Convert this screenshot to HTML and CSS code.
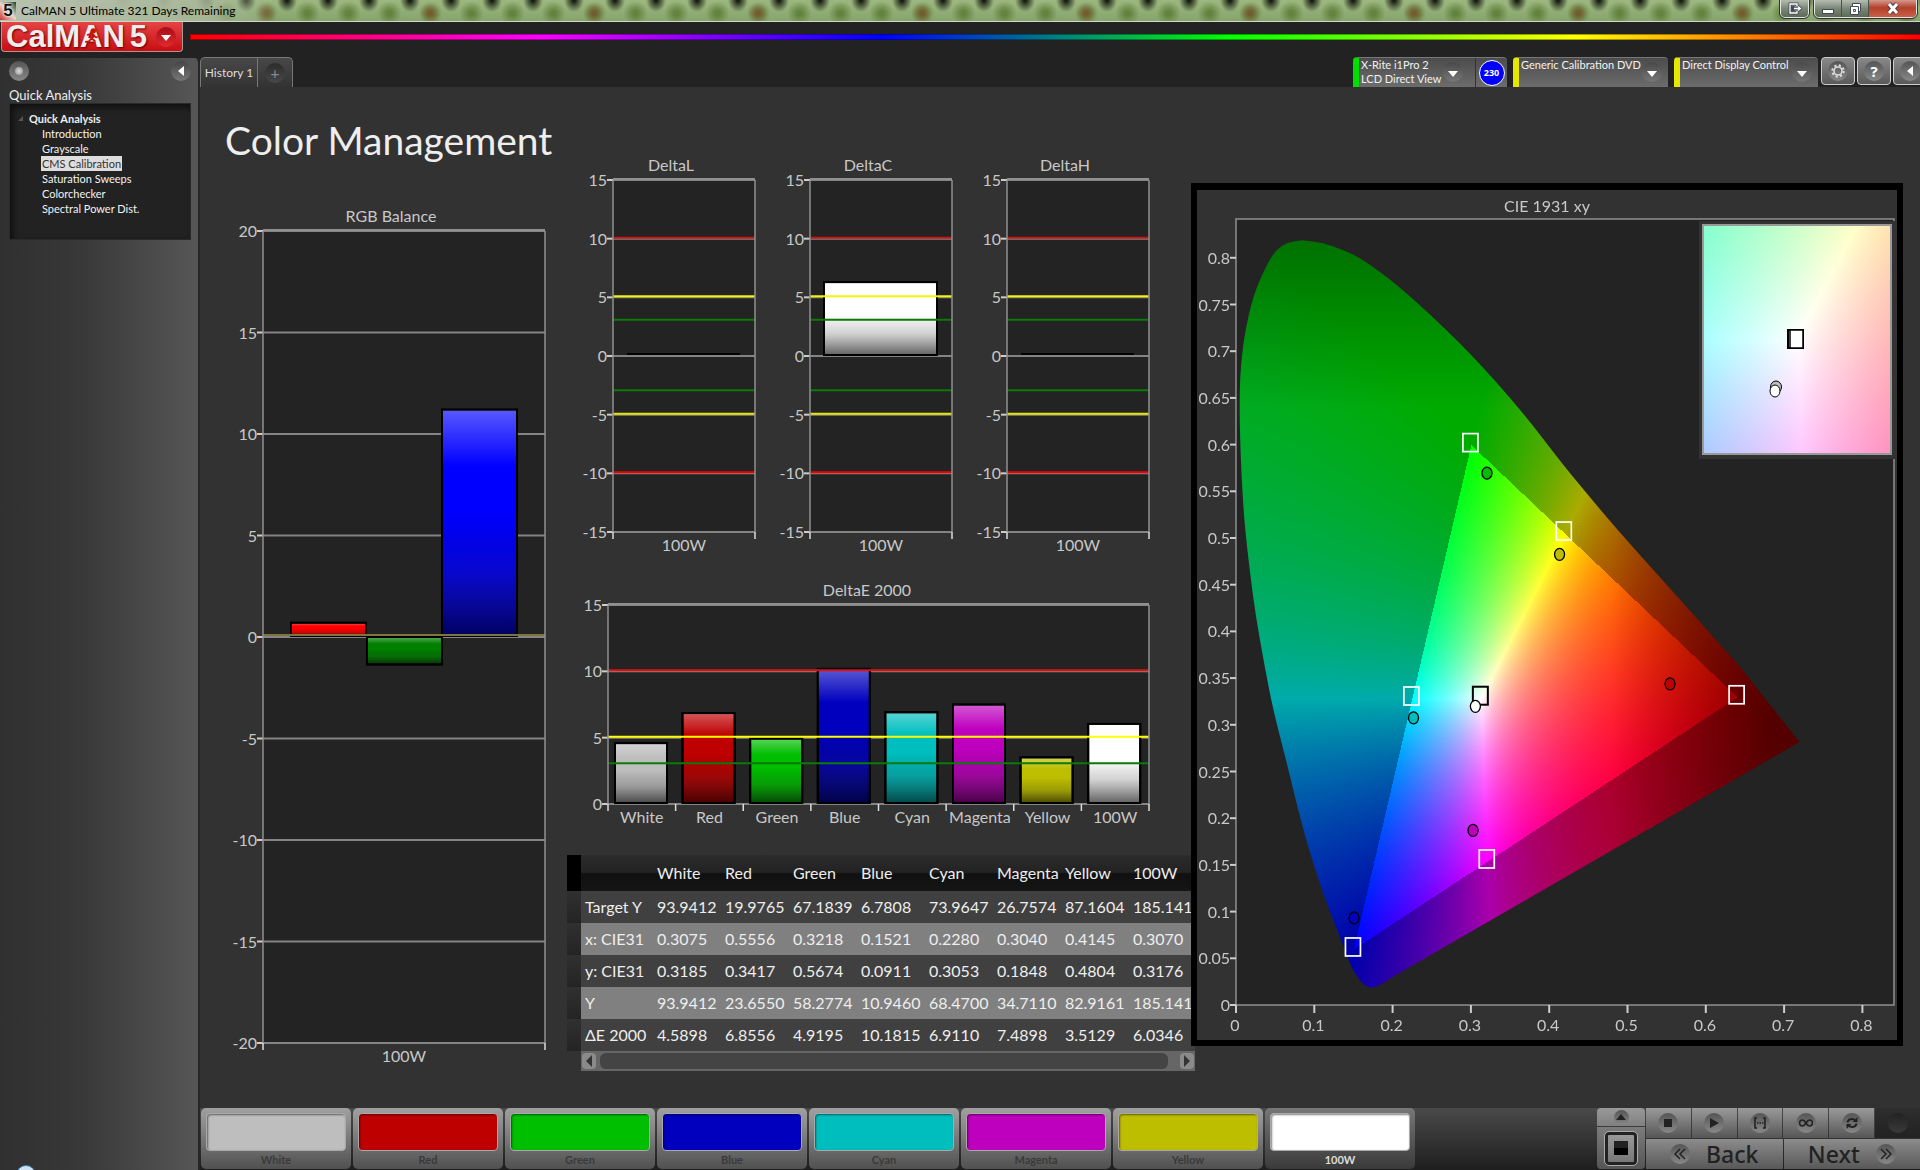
FILE: index.html
```html
<!DOCTYPE html>
<html lang="en">
<head>
<meta charset="utf-8">
<title>CalMAN 5 Ultimate</title>
<link rel="stylesheet" href="styles.css">
</head>
<body>
<div class="titlebar">
  <span class="app-icon">5</span>
  <span class="titlebar-text">CalMAN 5 Ultimate 321 Days Remaining</span>
  <div class="win-group">
    <button class="win-btn" aria-label="Detach"><svg width="14" height="14" viewBox="0 0 14 14"><path d="M9 4V2H2v9h7V9M5 4v5M6 6.500h6M10 4.500l2.500 2-2.500 2" fill="none" stroke="#444a55" stroke-width="3"/><path d="M9 4V2H2v9h7V9M6 6.500h6M10 4.500l2.500 2-2.500 2" fill="none" stroke="#fff" stroke-width="1.300"/></svg></button>
  </div>
  <div class="win-group win-group-main">
    <button class="win-btn" aria-label="Minimize"><svg width="14" height="14" viewBox="0 0 14 14"><rect x="1.500" y="7.500" width="11" height="4" fill="#fff" stroke="#444a55"/></svg></button>
    <button class="win-btn" aria-label="Restore"><svg width="14" height="14" viewBox="0 0 14 14"><path d="M4.500 1.500h8v8h-2v3h-8v-8h2z" fill="#fff" stroke="#444a55"/><path d="M5.500 7.500h2v2h-2zM5 4.500h5.500V10" fill="none" stroke="#444a55"/></svg></button>
    <button class="win-btn win-close" aria-label="Close"><svg width="14" height="14" viewBox="0 0 14 14"><path d="M3 2l8 9M11 2l-8 9" stroke="#54404a" stroke-width="5"/><path d="M3 2l8 9M11 2l-8 9" stroke="#fff" stroke-width="3"/></svg></button>
  </div>
</div>

<div class="brandbar">
  <button class="brand">
    <span class="brand-name">CalM<span class="brand-a">A<svg class="runner" viewBox="0 0 12 14"><circle cx="7.500" cy="2" r="1.600"/><path d="M2.500 5.500l3-1 2 .5-1 3.500 2 1.500v3M6 8l-2 2.500-3 .5M7.500 5l1.500 2 2 .3" fill="none" stroke-width="1.500"/></svg></span>N<span class="brand-5">5</span></span>
    <span class="round round-red"><svg width="10" height="6" viewBox="0 0 10 6"><path d="M0 0h10L5 6z" fill="#fff"/></svg></span>
  </button>
  <div class="rainbow"></div>
</div>

<div class="workspace">
  <aside class="sidebar">
    <div class="sidebar-top">
      <button class="round" aria-label="Pin"><span class="pin-dot"></span></button>
      <button class="round round-edge" aria-label="Collapse"><svg width="6" height="10" viewBox="0 0 6 10"><path d="M6 0v10L0 5z" fill="#fff"/></svg></button>
    </div>
    <h2 class="sidebar-title">Quick Analysis</h2>
    <nav class="tree">
      <div class="tree-root"><svg width="5" height="5" viewBox="0 0 5 5"><path d="M5 0v5H0z" fill="#555"/></svg>Quick Analysis</div>
      <ul class="tree-list">
        <li><a href="#intro">Introduction</a></li>
        <li><a href="#gray">Grayscale</a></li>
        <li><a href="#cms" class="current">CMS Calibration</a></li>
        <li><a href="#sat">Saturation Sweeps</a></li>
        <li><a href="#checker">Colorchecker</a></li>
        <li><a href="#spd">Spectral Power Dist.</a></li>
      </ul>
    </nav>
    <span class="orb"></span>
  </aside>

  <div class="main">
    <header class="tabs">
      <div class="history">
        <button class="history-tab">History 1</button>
        <button class="history-tab history-add" aria-label="Add history"><span class="round round-dark">+</span></button>
      </div>
      <div class="devices">
        <div class="device meter">
          <button class="device-main"><span class="device-text">X-Rite i1Pro 2<br>LCD Direct View</span><span class="round round-low"><svg width="10" height="6" viewBox="0 0 10 6"><path d="M0 0h10L5 6z" fill="#fff"/></svg></span></button>
          <button class="reading"><span class="reading-dot">230</span></button>
        </div>
        <div class="device source">
          <button class="device-main"><span class="device-text">Generic Calibration DVD</span><span class="round round-low"><svg width="10" height="6" viewBox="0 0 10 6"><path d="M0 0h10L5 6z" fill="#fff"/></svg></span></button>
        </div>
        <div class="device display">
          <button class="device-main"><span class="device-text">Direct Display Control</span><span class="round round-low"><svg width="10" height="6" viewBox="0 0 10 6"><path d="M0 0h10L5 6z" fill="#fff"/></svg></span></button>
        </div>
        <div class="tools">
          <button class="tool" aria-label="Settings"><span class="round"><svg width="14" height="14" viewBox="0 0 14 14"><circle cx="7" cy="7" r="4" fill="none" stroke="#ddd" stroke-width="1.600"/><circle cx="7" cy="7" r="5.700" fill="none" stroke="#ddd" stroke-width="2" stroke-dasharray="2.200 2.280"/></svg></span></button>
          <button class="tool" aria-label="Help"><span class="round help">?</span></button>
          <button class="tool" aria-label="Collapse panel"><span class="round"><svg width="6" height="10" viewBox="0 0 6 10"><path d="M6 0v10L0 5z" fill="#fff"/></svg></span></button>
        </div>
      </div>
    </header>

    <main class="content">
      <section class="col-left">
        <h1 class="page-title">Color Management</h1>
        <svg class="chart" id="rgb-balance" viewBox="0 0 360 870"></svg>
      </section>

      <section class="col-mid">
        <div class="deltas">
          <svg class="chart" id="delta-l" viewBox="0 0 197 410"></svg>
          <svg class="chart" id="delta-c" viewBox="0 0 197 410"></svg>
          <svg class="chart" id="delta-h" viewBox="0 0 197 410"></svg>
        </div>
        <div class="delta-e"><svg class="chart" id="delta-e" viewBox="0 0 591 270"></svg></div>
        <div class="readings">
          <table>
            <colgroup><col class="c-mark"><col class="c-label"><col span="8" class="c-value"></colgroup>
            <thead><tr><td></td><th></th><th>White</th><th>Red</th><th>Green</th><th>Blue</th><th>Cyan</th><th>Magenta</th><th>Yellow</th><th>100W</th></tr></thead>
            <tbody>
              <tr><td></td><th>Target Y</th><td>93.9412</td><td>19.9765</td><td>67.1839</td><td>6.7808</td><td>73.9647</td><td>26.7574</td><td>87.1604</td><td>185.141</td></tr>
              <tr><td></td><th>x: CIE31</th><td>0.3075</td><td>0.5556</td><td>0.3218</td><td>0.1521</td><td>0.2280</td><td>0.3040</td><td>0.4145</td><td>0.3070</td></tr>
              <tr><td></td><th>y: CIE31</th><td>0.3185</td><td>0.3417</td><td>0.5674</td><td>0.0911</td><td>0.3053</td><td>0.1848</td><td>0.4804</td><td>0.3176</td></tr>
              <tr><td></td><th>Y</th><td>93.9412</td><td>23.6550</td><td>58.2774</td><td>10.9460</td><td>68.4700</td><td>34.7110</td><td>82.9161</td><td>185.141</td></tr>
              <tr><td></td><th>ΔE 2000</th><td>4.5898</td><td>6.8556</td><td>4.9195</td><td>10.1815</td><td>6.9110</td><td>7.4898</td><td>3.5129</td><td>6.0346</td></tr>
            </tbody>
          </table>
          <div class="hscroll">
            <button class="hscroll-btn" aria-label="Scroll left"><svg width="6" height="12" viewBox="0 0 6 12"><path d="M6 0v12L0 6z" fill="#333"/></svg></button>
            <div class="hscroll-thumb"></div>
            <button class="hscroll-btn" aria-label="Scroll right"><svg width="6" height="12" viewBox="0 0 6 12"><path d="M0 0v12l6-6z" fill="#333"/></svg></button>
          </div>
        </div>
      </section>

      <section class="cie">
        <svg class="chart" id="cie" viewBox="0 0 700 850">
          <rect class="plot-bg" x="39" y="29" width="658" height="786"/>
          <foreignObject x="39" y="29" width="658" height="786"><canvas id="gamut" width="658" height="786"></canvas></foreignObject>
          <g id="cie-axes"></g>
          <g id="cie-marks"></g>
          <rect x="502" y="31" width="197" height="238" fill="#323232"/>
          <foreignObject x="506" y="35" width="188" height="229"><canvas id="inset" width="188" height="229"></canvas></foreignObject>
          <rect x="506" y="35" width="188" height="229" fill="none" stroke="#999" stroke-width="2"/>
          <g class="inset-marks">
            <rect x="591" y="140" width="15" height="18" fill="none" stroke="#000" stroke-width="2"/>
            <rect x="593" y="140" width="13" height="18" fill="#fff" stroke="#000" stroke-width="1.500"/>
            <ellipse cx="579" cy="197" rx="5.500" ry="6" fill="#bebebe" stroke="#000"/>
            <ellipse cx="578" cy="201" rx="5" ry="6" fill="#fff" stroke="#000"/>
          </g>
        </svg>
      </section>
    </main>

    <footer class="bottombar">
      <div class="patches">
        <button class="patch white"><span class="swatch"></span>White</button>
        <button class="patch red"><span class="swatch"></span>Red</button>
        <button class="patch green"><span class="swatch"></span>Green</button>
        <button class="patch blue"><span class="swatch"></span>Blue</button>
        <button class="patch cyan"><span class="swatch"></span>Cyan</button>
        <button class="patch magenta"><span class="swatch"></span>Magenta</button>
        <button class="patch yellow"><span class="swatch"></span>Yellow</button>
        <button class="patch full active"><span class="swatch"></span>100W</button>
      </div>
      <div class="transport">
        <div class="pattern">
          <button class="pattern-up" aria-label="Show pattern"><span class="round round-small"><svg width="10" height="6" viewBox="0 0 10 6"><path d="M0 6h10L5 0z" fill="#222"/></svg></span></button>
          <button class="pattern-window" aria-label="Pattern window"><span class="pattern-frame"><span class="pattern-box"></span></span></button>
        </div>
        <div class="controls">
          <div class="controls-row">
            <button class="ctl" aria-label="Stop"><span class="round"><svg width="8" height="8" viewBox="0 0 8 8"><rect width="8" height="8" fill="#222"/></svg></span></button>
            <button class="ctl" aria-label="Play"><span class="round"><svg width="9" height="10" viewBox="0 0 9 10"><path d="M0 0l9 5-9 5z" fill="#222"/></svg></span></button>
            <button class="ctl" aria-label="Read series"><span class="round"><svg width="12" height="12" viewBox="0 0 12 12"><path d="M3 1H1v10h2M9 1h2v10H9" fill="none" stroke="#222" stroke-width="1.600"/><path d="M3 6h1.500M5.500 6H7M8 6h1.500" stroke="#222" stroke-width="1.500"/></svg></span></button>
            <button class="ctl" aria-label="Continuous"><span class="round"><svg width="14" height="8" viewBox="0 0 14 8"><path d="M7 4C5.500 1.500 4.500 1 3.500 1a3 3 0 000 6C4.500 7 5.500 6.500 7 4s2.500-3 3.500-3a3 3 0 010 6C9.500 7 8.500 6.500 7 4z" fill="none" stroke="#222" stroke-width="1.600"/></svg></span></button>
            <button class="ctl" aria-label="Refresh"><span class="round"><svg width="12" height="12" viewBox="0 0 12 12"><path d="M1.500 5.500C2 3 4 2 6 2c1.500 0 2.500.5 3.500 1.500M10.500 6.500C10 9 8 10 6 10c-1.500 0-2.500-.5-3.500-1.500" fill="none" stroke="#222" stroke-width="2"/><path d="M11.500 0v5h-5zM.500 12V7h5z" fill="#222"/></svg></span></button>
            <button class="ctl ctl-off" aria-label="Unused"><span class="round round-off"></span></button>
          </div>
          <div class="controls-row">
            <button class="nav-btn"><span class="round"><svg width="12" height="12" viewBox="0 0 12 12"><path d="M6 1L1 6l5 5M11 1L6 6l5 5" fill="none" stroke="#222" stroke-width="1.500"/></svg></span>Back</button>
            <button class="nav-btn">Next<span class="round"><svg width="12" height="12" viewBox="0 0 12 12"><path d="M1 1l5 5-5 5M6 1l5 5-5 5" fill="none" stroke="#222" stroke-width="1.500"/></svg></span></button>
          </div>
        </div>
      </div>
    </footer>
  </div>
</div>
<script src="charts.js"></script>
</body>
</html>
```
FILE: styles.css
```css
* { box-sizing: border-box; }
body {
  margin: 0;
  min-height: 100vh;
  display: flex;
  flex-direction: column;
  background: #222;
  color: #eee;
  font-family: Lato, "Noto Sans", sans-serif;
  font-size: 13px;
  overflow-x: hidden;
}
button {
  font: inherit;
  color: inherit;
  border: 0;
  padding: 0;
  margin: 0;
  background: none;
}
svg { display: block; }
h1, h2, ul { margin: 0; padding: 0; font-weight: normal; list-style: none; }

/* window title bar */
.titlebar {
  height: 22px;
  display: flex;
  align-items: flex-start;
  border-bottom: 1px solid #cfd8c8;
  background:
    linear-gradient(90deg, #b9c1b0 0, rgba(170, 185, 155, .9) 200px, transparent 280px),
    radial-gradient(ellipse 10px 10px at 50% 60%, rgba(130, 50, 30, .5) 10%, transparent) 20px 0 / 164px 22px,
    radial-gradient(ellipse 12px 12px at 50% 60%, rgba(80, 115, 40, .7) 20%, transparent) 0 0 / 41px 22px,
    radial-gradient(ellipse 10px 12px at 0 0, #151b10 10%, transparent) 0 0 / 41px 22px,
    radial-gradient(ellipse 10px 12px at 100% 0, #151b10 10%, transparent) 0 0 / 41px 22px,
    linear-gradient(#9db780, #86a46c);
}
.app-icon {
  width: 16px;
  height: 18px;
  margin-top: 2px;
  font: bold 17px/18px "Liberation Sans", sans-serif;
  color: #111;
  text-align: center;
  text-shadow: 0 0 2px #fff, 0 0 2px #fff;
  background: linear-gradient(45deg, #c33, #e9d6c8, #164a24);
}
.titlebar-text {
  margin-left: 5px;
  flex: 1;
  font: 12px/22px "Noto Sans", sans-serif;
  font-family: Lato, "Noto Sans", sans-serif;
  color: #000;
}
.win-group {
  display: flex;
  height: 18px;
  margin-right: 5px;
  border: 1px solid #e4e4e4;
  border-top: 0;
  border-radius: 0 0 5px 5px;
  outline: 1px solid #333;
  background: linear-gradient(#b5bdb0, #7b8776 50%, #5e6a58);
  overflow: hidden;
}
.win-group-main { margin-right: 3px; }
.win-btn { width: 27px; display: grid; place-items: center; border-right: 1px solid #4a5246; }
.win-btn:last-child { border-right: 0; }
.win-close { width: 47px; background: linear-gradient(#d59a8d, #b3402a 45%, #c9604a); }

/* brand */
.brandbar { height: 36px; display: flex; align-items: flex-start; }
.brand {
  width: 182px;
  height: 30px;
  margin-left: 1px;
  display: flex;
  align-items: center;
  justify-content: space-between;
  padding: 0 6px 0 4px;
  border: 1px solid #a99;
  border-top: 0;
  border-radius: 0 0 4px 4px;
  background: linear-gradient(#e54444, #c80d12);
}
.brand-name {
  font: bold 31px/27px "Liberation Sans", sans-serif;
  color: #eee;
  text-shadow: 1px 1px 2px #600;
  white-space: nowrap;
}
.brand-a { position: relative; }
.brand-5 { margin-left: 5px; }
.runner { position: absolute; left: 4px; top: 9px; width: 15px; height: 18px; fill: #c11; stroke: #c11; }
.rainbow {
  flex: 1;
  height: 6px;
  margin: 12px 0 0 7px;
  border: 1px solid rgba(0, 0, 0, .35);
  border-right: 0;
  background: linear-gradient(90deg, #f00, #f0f 20%, #00f 40%, #0f0 60%, #ff0 80%, #f00);
}

/* round icon holders */
.round {
  flex: none;
  width: 20px;
  height: 20px;
  border-radius: 50%;
  display: grid;
  place-items: center;
  background: linear-gradient(#555, #888);
}
.round-red { background: linear-gradient(#a80d14, #e02a30); }
.round-dark { background: linear-gradient(#2c2c2c, #484848); color: #888; font-size: 16px; line-height: 20px; }
.round-low { background: linear-gradient(#484848, #777); }
.round-low svg, .round-red svg { margin-top: 3px; }
.round-small { width: 15px; height: 15px; }
.round-off { background: linear-gradient(#222, #3a3a3a); }

/* workspace */
.workspace { flex: 1; display: flex; }
.sidebar {
  position: relative;
  flex: none;
  width: 200px;
  padding: 3px 7px 0 9px;
  border-right: 2px solid #262626;
  border-top-right-radius: 5px;
  background: linear-gradient(90deg, #303030, #383838 40%, #565656);
  overflow: hidden;
}
.sidebar-top { display: flex; justify-content: space-between; }
.pin-dot { width: 8px; height: 8px; border-radius: 50%; background: radial-gradient(#ddd, #888); }
.round-edge { background: linear-gradient(#444, #777); }
.sidebar-title { font-size: 13px; line-height: 16px; margin-top: 6px; }
.tree {
  height: 137px;
  padding-top: 7px;
  background: #222;
  box-shadow: inset 3px 3px 6px #0e0e0e;
  border: 1px solid #2a2a2a;
  font-size: 11px;
  line-height: 15px;
}
.tree-root { display: flex; align-items: center; gap: 6px; padding-left: 8px; font-weight: bold; }
.tree-list { padding: 0 0 0 31px; }
.tree-list a { color: #f2f2f2; text-decoration: none; display: inline-block; padding: 0 1px; }
.tree-list li { height: 15px; }
.tree-list .current { background: #ddd; color: #333; }
.orb {
  position: absolute;
  left: 16px;
  bottom: -15px;
  width: 20px;
  height: 20px;
  border-radius: 50%;
  background: #cfe2f2;
  border: 1px solid #3a78b5;
}
.main { flex: 1; min-width: 0; display: flex; flex-direction: column; }

/* tab strip */
.tabs { display: flex; justify-content: space-between; height: 30px; overflow: hidden; margin-top: -1px; }
.history { display: flex; }
.history-tab {
  width: 58px;
  border: 1px solid #777;
  border-bottom: 0;
  border-radius: 5px 0 0 0;
  background: linear-gradient(#484848, #333);
  font-size: 12px;
  color: #ddd;
  white-space: nowrap;
}
.history-add { width: 35px; border-left: 0; border-radius: 0 5px 0 0; display: grid; place-items: center; }
.devices { display: flex; gap: 6px; margin-right: -7px; }
.device {
  display: flex;
  border-radius: 4px 4px 0 0;
  border-top: 1px solid #777;
  background: linear-gradient(#4c4c4c, #6c6c6c);
  border-left: 6px solid #e6e600;
}
.meter { border-left-color: #00e000; width: 154px; }
.source { width: 155px; }
.display { width: 144px; }
.device-main { flex: 1; min-width: 0; display: flex; align-items: flex-start; justify-content: space-between; padding: 0 6px 0 2px; text-align: left; }
.meter .device-main { padding-right: 12px; }
.device-text { font-size: 11px; line-height: 14px; color: #f2f2f2; white-space: nowrap; }
.device-main .round { margin: 4px 0 0 -4px; }
.reading { width: 32px; border-left: 1px solid #333; display: grid; place-items: center; }
.reading-dot {
  width: 26px;
  height: 26px;
  border-radius: 50%;
  border: 1px solid #fff;
  background: #00f;
  font: bold 9px/24px "Open Sans", sans-serif;
  color: #fff;
}
.tools { display: flex; gap: 2px; margin-left: -3px; }
.tool {
  width: 34px;
  height: 28px;
  border: 1px solid #ccc;
  border-radius: 4px;
  display: grid;
  place-items: center;
  background: linear-gradient(#888, #5a5a5a);
}
.help { font: bold 15px/20px "Noto Sans", sans-serif; color: #fff; }

/* content */
.content {
  flex: 1;
  display: grid;
  grid-template-columns: minmax(0, 360fr) minmax(0, 631fr) minmax(0, 712fr);
  align-items: start;
  padding-right: 17px;
  background: #323232;
}
.chart { width: 100%; height: auto; }
.chart text {
  font-family: Lato, "Noto Sans", sans-serif;
  font-size: 16px;
  fill: #c8c8c8;
}
.page-title {
  font-size: 39px;
  line-height: 56px;
  padding: 25px 0 0 25px;
  margin-bottom: 32px;
  white-space: nowrap;
}
.col-mid { padding-top: 63px; }
.deltas { display: grid; grid-template-columns: repeat(3, 1fr); padding-right: 40px; }
.delta-e { padding: 10px 40px 0 0; }
.plot-bg { fill: #232323; }
.readings { margin: 15px -4px 0 7px; overflow: hidden; }
.readings table {
  width: 630px;
  table-layout: fixed;
  border-collapse: collapse;
  font-size: 16px;
  line-height: 24px;
}
.c-mark { width: 14px; }
.c-label { width: 72px; }
.c-value { width: 68px; }
.readings th, .readings td { padding: 0 4px; text-align: left; font-weight: normal; white-space: nowrap; height: 32px; }
.readings thead th { height: 36px; background: linear-gradient(#2c2c2c, #222 48%, #101010 52%, #151515); }
.readings thead td { background: #000; }
.readings tbody tr { background: #404040; }
.readings tbody tr:nth-child(even) { background: #808080; }
.readings tbody td:first-child { background: linear-gradient(#303030, #242424); }
.hscroll {
  height: 20px;
  margin-left: 14px;
  padding: 2px 1px;
  display: flex;
  gap: 4px;
  background: #666;
}
.hscroll-btn { width: 14px; display: grid; place-items: center; background: #8a8a8a; border-radius: 4px; }
.hscroll-thumb { flex: 1; margin-right: 8px; background: #444; border-radius: 6px; }
.cie {
  position: relative;
  margin-top: 96px;
  border: 6px solid #000;
  border-top-width: 7px;
  background: #323232;
}
.cie canvas { display: block; }

/* bottom bar */
.bottombar {
  height: 62px;
  display: flex;
  justify-content: space-between;
  background: linear-gradient(#4a4a4a, #1e1e1e);
}
.patches { display: flex; gap: 2px; margin-left: 1px; }
.patch {
  width: 150px;
  height: 61px;
  padding: 4px 5px 0;
  border-radius: 5px;
  background: linear-gradient(#a0a0a0, #8a8a8a 30%, #505050);
  font: bold 11px/18px Lato, "Noto Sans", sans-serif;
  color: #3a3a3a;
}
.swatch {
  display: block;
  height: 38px;
  border: 1px solid #aaa;
  border-radius: 4px;
  box-shadow: inset 1px 1px 2px rgba(0, 0, 0, .5);
}
.white .swatch { background: #bebebe; }
.red .swatch { background: #be0000; }
.green .swatch { background: #00be00; }
.blue .swatch { background: #0000be; }
.cyan .swatch { background: #00bebe; }
.magenta .swatch { background: #be00be; }
.yellow .swatch { background: #bebe00; }
.full .swatch { background: #fff; }
.active { background: linear-gradient(#777, #3a3a3a); color: #ddd; }
.transport { display: flex; gap: 1px; }
.pattern { width: 48px; display: flex; flex-direction: column; gap: 1px; height: 61px; }
.pattern-up { height: 18px; border-radius: 4px 4px 0 0; background: linear-gradient(#999, #808080); display: grid; place-items: center; }
.pattern-window { flex: 1; border-radius: 0 0 4px 4px; background: linear-gradient(#7c7c7c, #555); display: grid; place-items: center; }
.pattern-frame {
  width: 32px;
  height: 33px;
  border: 3px solid #222;
  outline: 1px solid #aaa;
  border-radius: 4px;
  display: grid;
  place-items: center;
  background: linear-gradient(#999, #777);
}
.pattern-box { width: 14px; height: 14px; background: linear-gradient(#222 50%, #000 50%); }
.controls { width: 274px; height: 61px; display: flex; flex-direction: column; gap: 1px; }
.controls-row { flex: 1; display: flex; gap: 1px; }
.ctl { flex: 1; display: grid; place-items: center; background: linear-gradient(#9a9a9a, #565656); }
.ctl-off { background: linear-gradient(#2e2e2e, #222); }
.nav-btn {
  flex: 1;
  display: flex;
  align-items: center;
  justify-content: center;
  gap: 16px;
  background: linear-gradient(#8c8c8c, #585858);
  font: 500 23px/30px "Noto Sans", sans-serif;
  color: #222;
}
```
FILE: charts.js
```js
const NS = 'http://www.w3.org/2000/svg';

function add(parent, name, attrs, text) {
  const el = document.createElementNS(NS, name);
  for (const key in attrs) el.setAttribute(key, attrs[key]);
  if (text !== undefined) el.textContent = text;
  parent.appendChild(el);
  return el;
}

function line(parent, x1, y1, x2, y2, stroke, width) {
  add(parent, 'line', { x1, y1, x2, y2, stroke, 'stroke-width': width });
}

// Gloss laid over every bar: a highlight at the top, a shade at the bottom.
function gloss(svg) {
  const g = add(svg, 'linearGradient', { id: svg.id + '-gloss', x1: 0, y1: 0, x2: 0, y2: 1 });
  [[0, '#fff', 0.35], [0.25, '#fff', 0], [0.45, '#000', 0], [0.7, '#222', 0.2], [1, '#000', 0.62]]
    .forEach(([offset, c, o]) => add(g, 'stop', { offset, 'stop-color': c, 'stop-opacity': o }));
}

function barChart(id, o) {
  const svg = document.getElementById(id);
  const { x, y, w, h } = o.plot;
  const py = v => y + h * (o.max - v) / (o.max - o.min);
  gloss(svg);
  add(svg, 'text', { x: o.titleX, y: y - 9, 'text-anchor': 'middle' }, o.title);
  add(svg, 'rect', { x, y, width: w, height: h, fill: '#232323' });
  for (let v = o.min; v <= o.max; v += 5) {
    line(svg, x - 6, py(v), x, py(v), '#ccc', 2);
    line(svg, x, py(v), x + w, py(v), '#848484', 2);
    add(svg, 'text', { x: x - 6, y: py(v) + 6, 'text-anchor': 'end' }, v);
  }
  line(svg, x, y - 1, x + w, y - 1, '#909090', 2);
  o.bars.forEach(b => {
    const height = Math.abs(py(b.v) - py(0)) - 1;
    if (height < 2) {
      line(svg, x + b.x, py(0) - 2, x + b.x + b.w, py(0) - 2, '#000', 2);
      return;
    }
    const box = { x: x + b.x, y: Math.min(py(b.v), py(0)), width: b.w, height };
    add(svg, 'rect', { ...box, fill: b.fill, stroke: '#000', 'stroke-width': 2 });
    add(svg, 'rect', { ...box, fill: `url(#${id}-gloss)`, stroke: '#000', 'stroke-width': 2 });
  });
  o.limits.forEach(([v, c]) => line(svg, x, py(v) - 1, x + w, py(v) - 1, c, 2));
  line(svg, x, y, x, y + h, '#909090', 1.5);
  line(svg, x + w, y, x + w, y + h, '#909090', 1.5);
  const slot = w / o.labels.length;
  for (let i = 0; i <= o.labels.length; i++) line(svg, x + slot * i, y + h, x + slot * i, y + h + 7, '#ddd', 1.5);
  o.labels.forEach((t, i) => add(svg, 'text', { x: x + slot * (i + 0.5), y: y + h + 19, 'text-anchor': 'middle' }, t));
}

barChart('rgb-balance', {
  title: 'RGB Balance', titleX: 191, plot: { x: 63, y: 31, w: 282, h: 812 }, min: -20, max: 20, labels: ['100W'],
  bars: [
    { x: 28, w: 75, v: 0.7, fill: '#f00' },
    { x: 104, w: 75, v: -1.4, fill: '#008000' },
    { x: 179, w: 75, v: 11.2, fill: '#00f' }
  ],
  limits: [[0.05, '#7d7440']]
});

const deltaLimits = [[10, '#c81414'], [5, '#f5f500'], [3, '#0a7a0a'], [-3, '#0a7a0a'], [-5, '#e6e600'], [-10, '#f00000']];
[['delta-l', 'DeltaL', 0.05], ['delta-c', 'DeltaC', 6.3], ['delta-h', 'DeltaH', 0.05]].forEach(([id, title, v]) => {
  barChart(id, {
    title, titleX: 111, plot: { x: 53, y: 30, w: 142, h: 352 }, min: -15, max: 15, labels: ['100W'],
    bars: [{ x: 14, w: 113, v, fill: '#fff' }], limits: deltaLimits
  });
});

const patches = [
  ['White', 4.5898, '#bebebe'], ['Red', 6.8556, '#be0000'], ['Green', 4.9195, '#00be00'], ['Blue', 10.1815, '#0000be'],
  ['Cyan', 6.911, '#00bebe'], ['Magenta', 7.4898, '#be00be'], ['Yellow', 3.5129, '#bebe00'], ['100W', 6.0346, '#fff']
];
barChart('delta-e', {
  title: 'DeltaE 2000', titleX: 307, plot: { x: 48, y: 35, w: 541, h: 199 }, min: 0, max: 15, labels: patches.map(p => p[0]),
  bars: patches.map((p, i) => ({ x: i * 67.6 + 7, w: 52, v: p[1], fill: p[2] })),
  limits: [[10, '#e01010'], [5, '#ff0'], [3, '#0a7a0a']]
});

// CIE 1931 diagram
const LOCUS = [
  [.0845, .8187], [.067, .817], [.054, .8105], [.044, .7998], [.031, .778], [.0207, .7548], [.012, .7227], [.0066, .6906],
  [.0045, .655], [.0049, .6124], [.0079, .5514], [.012, .505], [.0207, .4443], [.0262, .4122], [.0358, .366], [.0474, .3158],
  [.065, .259], [.0824, .198], [.1003, .1467], [.1178, .1039], [.1354, .0675], [.147, .0407], [.156, .0289], [.1635, .0214],
  [.1723, .0182], [.182, .0203], [.2, .03], [.7197, .2816], [.6427, .363], [.5907, .4122], [.491, .505], [.4464, .5493],
  [.4144, .582], [.367, .634], [.2995, .698], [.2395, .746], [.1973, .777], [.159, .7998], [.1373, .8084], [.1117, .816]
];
const SX = 783, SY = 934;
const inTriangle = (x, y) => {
  const side = (ax, ay, bx, by) => (bx - ax) * (y - ay) - (by - ay) * (x - ax);
  return side(.64, .33, .3, .6) >= 0 && side(.3, .6, .15, .06) >= 0 && side(.15, .06, .64, .33) >= 0;
};

function colorAt(x, y) {
  const X = x / y, Z = (1 - x - y) / y;
  const rgb = [
    3.2406 * X - 1.5372 - 0.4986 * Z,
    -0.9689 * X + 1.8758 + 0.0415 * Z,
    0.0557 * X - 0.204 + 1.057 * Z
  ].map(c => Math.max(0, c));
  const top = Math.max(...rgb);
  let level = 255 / top;
  if (x > .48) level *= Math.max(.5, 1 - (x - .48) * 2.5);
  if (y > .64) level *= 1 - (y - .64) * 1.9;
  if (!inTriangle(x, y)) level *= .67;
  return rgb.map(c => c * level);
}

function paint(canvas, toXY) {
  const { width, height } = canvas;
  const ctx = canvas.getContext('2d');
  const data = ctx.createImageData(width, height);
  for (let j = 0, k = 0; j < height; j++) {
    for (let i = 0; i < width; i++, k += 4) {
      const [x, y] = toXY(i, j);
      const c = colorAt(x, Math.max(y, .001));
      data.data[k] = c[0];
      data.data[k + 1] = c[1];
      data.data[k + 2] = c[2];
      data.data[k + 3] = 255;
    }
  }
  ctx.putImageData(data, 0, 0);
  return ctx;
}

const gamut = document.getElementById('gamut');
const ctx = paint(gamut, (i, j) => [i / SX, (gamut.height - j) / SY]);
ctx.globalCompositeOperation = 'destination-in';
ctx.beginPath();
const pts = LOCUS.map(([x, y]) => [x * SX, gamut.height - y * SY]);
ctx.moveTo(...pts[0]);
pts.forEach((p, i) => {
  const next = pts[(i + 1) % pts.length];
  // the purple line and its red corner stay sharp, the rest is smoothed
  if (i >= 26 && i <= 28) ctx.lineTo(...p);
  else ctx.quadraticCurveTo(...p, (p[0] + next[0]) / 2, (p[1] + next[1]) / 2);
});
ctx.closePath();
ctx.fill();

paint(document.getElementById('inset'), (i, j) => [.3127 + (i - 94) / 3790, .329 - (j - 114) / 4450]);

const axes = document.getElementById('cie-axes');
const cx = x => 39 + x * SX;
const cy = y => 815 - y * SY;
add(axes, 'rect', { x: 39, y: 29, width: 658, height: 786, fill: 'none', stroke: '#909090', 'stroke-width': 1.5 });
add(axes, 'text', { x: 350, y: 22, 'text-anchor': 'middle' }, 'CIE 1931 xy');
for (let i = 0; i <= 16; i++) {
  const y = cy(i * .05);
  line(axes, 33, y, 39, y, '#ccc', 2);
  add(axes, 'text', { x: 33, y: y + 6, 'text-anchor': 'end' }, +(i * .05).toFixed(2));
}
for (let i = 0; i <= 8; i++) {
  const x = cx(i * .1);
  line(axes, x, 815, x, 823, '#ccc', 2);
  add(axes, 'text', { x: x - 1, y: 841, 'text-anchor': 'middle' }, +(i * .1).toFixed(1));
}

const marks = document.getElementById('cie-marks');
[[.64, .33], [.3, .6], [.15, .06], [.2246, .3287], [.3209, .1542], [.4193, .5053]].forEach(([x, y]) =>
  add(marks, 'rect', { x: cx(x) - 8, y: cy(y) - 11, width: 15, height: 18, fill: 'none', stroke: '#fff', 'stroke-width': 1.7 }));
add(marks, 'rect', { x: cx(.3127) - 8, y: cy(.329) - 11, width: 15, height: 18, fill: 'none', stroke: '#000', 'stroke-width': 2 });
[[.5556, .3417, '#be0000'], [.3218, .5674, '#00be00'], [.1521, .0911, '#0000be'], [.228, .3053, '#00bebe'],
 [.304, .1848, '#be00be'], [.4145, .4804, '#bebe00'], [.307, .3176, '#fff']].forEach(([x, y, fill]) =>
  add(marks, 'ellipse', { cx: cx(x) - 1, cy: cy(y) - 2, rx: 5, ry: 6, fill, stroke: '#000', 'stroke-width': 1.3 }));
```
